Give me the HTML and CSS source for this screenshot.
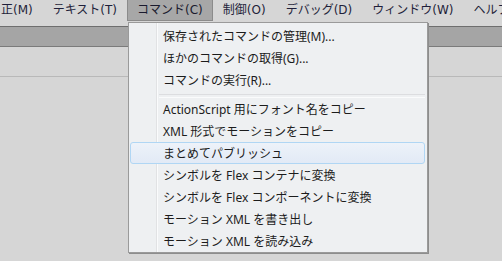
FILE: index.html
```html
<!DOCTYPE html>
<html lang="ja">
<head>
    <meta charset="UTF-8">
    <title>コマンド</title>
    <link rel="stylesheet" href="styles.css">
</head>
<body>
    <div class="menubar">
        <span class="menu-item first">正(M)</span>
        <span class="menu-item">テキスト(T)</span>
        <span class="menu-item active">コマンド(C)</span>
        <span class="menu-item">制御(O)</span>
        <span class="menu-item">デバッグ(D)</span>
        <span class="menu-item">ウィンドウ(W)</span>
        <span class="menu-item">ヘルプ(H)</span>
    </div>
    <div class="toolbar"></div>
    <div class="panel"></div>

    <div class="dropdown">
        <div class="entry">保存されたコマンドの管理(M)...</div>
        <div class="entry">ほかのコマンドの取得(G)...</div>
        <div class="entry">コマンドの実行(R)...</div>
        <div class="separator"></div>
        <div class="entry">ActionScript 用にフォント名をコピー</div>
        <div class="entry">XML 形式でモーションをコピー</div>
        <div class="entry hover">まとめてパブリッシュ</div>
        <div class="entry">シンボルを Flex コンテナに変換</div>
        <div class="entry">シンボルを Flex コンポーネントに変換</div>
        <div class="entry">モーション XML を書き出し</div>
        <div class="entry">モーション XML を読み込み</div>
    </div>
</body>
</html>
```

FILE: styles.css
```css
* {
    box-sizing: border-box;
    margin: 0;
    padding: 0;
}

body {
    font-family: "Noto Sans", "Noto Sans CJK JP", sans-serif;
    font-size: 12px;
    color: #1c1c1c;
    background-color: #d6d6d6;
    width: 502px;
    height: 261px;
    overflow: hidden;
    position: relative;
}

.menubar {
    display: flex;
    height: 22px;
    overflow: hidden;
    white-space: nowrap;
    font-family: "DejaVu Sans", "Noto Sans CJK JP", sans-serif;
    color: #1f1f3a;
}
.menu-item {
    flex-shrink: 0;
    padding: 0 9px;
    line-height: 21px;
    height: 21px;
    border: 1px solid transparent;
    border-top: none;
}
.menu-item.first {
    margin-left: -9px;
}
.menu-item.active {
    background-color: #a7a7a7;
    border-color: #8b8b8b;
    color: #1a1a2e;
}

.toolbar {
    margin-top: 4px;
    height: 21px;
    background-color: #a5a5a5;
    border-top: 1px solid #6e6e6e;
    border-bottom: 1px solid #7b7b7b;
}
.panel {
    height: 30px;
    border-bottom: 1px solid #b9b9b9;
}

.dropdown {
    position: absolute;
    left: 128px;
    top: 22px;
    width: 300px;
    height: 231px;
    padding: 2px 2px 2px 1px;
    background-color: #eef0f2;
    background-image: linear-gradient(to right, transparent 27px, #e1e2e4 27px, #e1e2e4 28px, #fafbfc 28px, #fafbfc 29px, transparent 29px);
    border: 1px solid #9a9a9a;
    box-shadow: 1px 1px 0 #8d8d8d;
}
.entry {
    height: 22px;
    line-height: 21px;
    padding-left: 32px;
    white-space: nowrap;
    border: 1px solid transparent;
    border-radius: 3px;
}
.entry.hover {
    border-color: #b0d6f4;
    background: linear-gradient(#edf2f9, #e2eaf6);
}
.separator {
    height: 7px;
    margin-left: 29px;
    padding-top: 3px;
}
.separator::before {
    content: "";
    display: block;
    height: 2px;
    border-top: 1px solid #dcdde0;
    border-bottom: 1px solid #fafbfc;
}
```
